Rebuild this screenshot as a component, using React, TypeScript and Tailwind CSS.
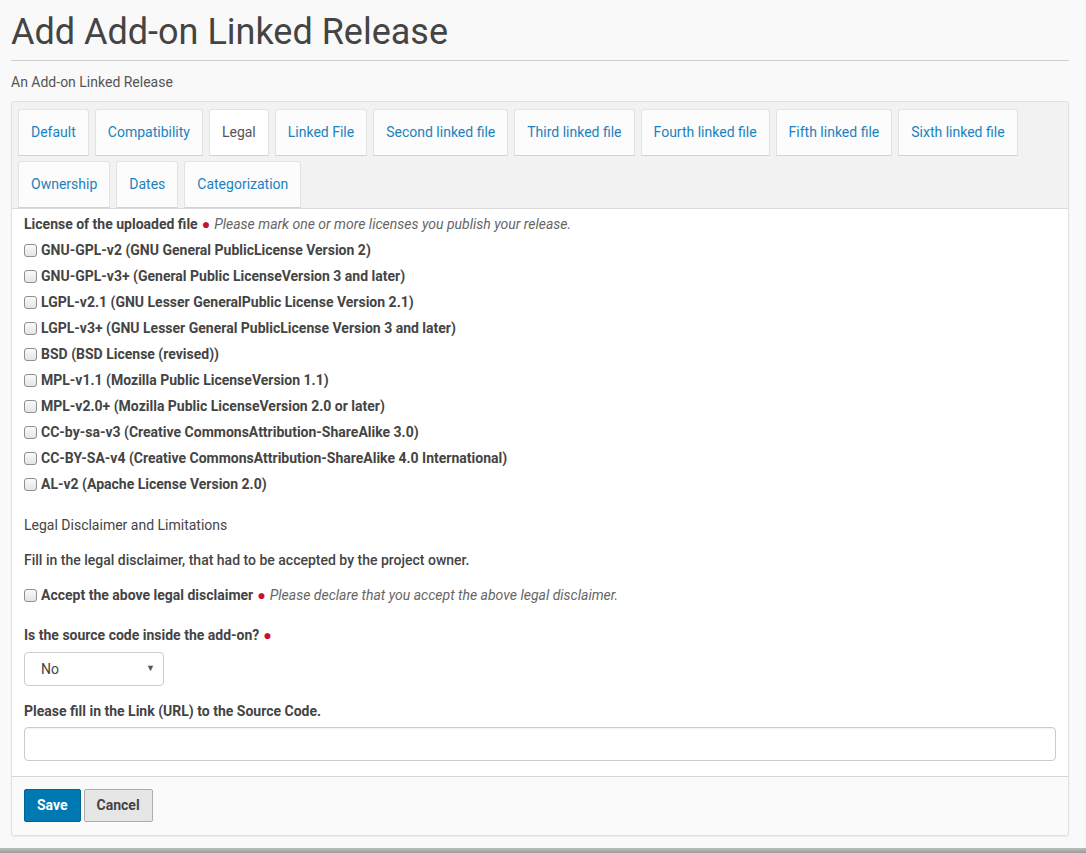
import React from "react";

const tabsRow1 = [
  "Default",
  "Compatibility",
  "Legal",
  "Linked File",
  "Second linked file",
  "Third linked file",
  "Fourth linked file",
  "Fifth linked file",
  "Sixth linked file",
];
const tabsRow2 = ["Ownership", "Dates", "Categorization"];

const licenses = [
  "GNU-GPL-v2 (GNU General PublicLicense Version 2)",
  "GNU-GPL-v3+ (General Public LicenseVersion 3 and later)",
  "LGPL-v2.1 (GNU Lesser GeneralPublic License Version 2.1)",
  "LGPL-v3+ (GNU Lesser General PublicLicense Version 3 and later)",
  "BSD (BSD License (revised))",
  "MPL-v1.1 (Mozilla Public LicenseVersion 1.1)",
  "MPL-v2.0+ (Mozilla Public LicenseVersion 2.0 or later)",
  "CC-by-sa-v3 (Creative CommonsAttribution-ShareAlike 3.0)",
  "CC-BY-SA-v4 (Creative CommonsAttribution-ShareAlike 4.0 International)",
  "AL-v2 (Apache License Version 2.0)",
];

function Tab({ label }: { label: string }) {
  const active = label === "Legal";
  return (
    <div
      className={`h-[47px] px-[12px] flex items-center border border-[#e3e3e3] border-b-[#d2d2d2] rounded-t-[3px] bg-[#fcfcfc] text-[14px] ${
        active ? "text-[#555] bg-white" : "text-[#1a82bf]"
      }`}
    >
      {label}
    </div>
  );
}

function Dot() {
  return <span className="text-[#c8102e] mx-[4px] text-[14px]">●</span>;
}

function Box() {
  return (
    <span className="inline-block w-[13px] h-[13px] rounded-[3px] border border-[#8f8f8f] bg-gradient-to-b from-[#fafafa] to-[#e4e4e4] mr-[4px] shrink-0" />
  );
}

export default function App() {
  return (
    <div
      className="min-h-[853px] bg-[#f9f9f9] flex flex-col text-[#444]"
      style={{ fontFamily: "Roboto, 'Noto Sans', sans-serif" }}
    >
      <div className="flex-1 px-[11px] pr-[17px]">
        <h1 className="text-[36px] leading-[40px] pt-[12px] pb-[8px] text-[#444] font-normal">
          Add Add-on Linked Release
        </h1>
        <div className="border-t border-[#cfcfcf]" />
        <p className="text-[14px] text-[#555] mt-[12px] leading-[18px]">
          An Add-on Linked Release
        </p>
        <div className="mt-[10px] border border-[#e0e0e0] rounded-[3px] bg-white shadow-[0_1px_2px_rgba(0,0,0,0.06)] overflow-hidden">
          <div className="bg-[#f2f2f2] border-b border-[#dcdcdc] px-[6px] pt-[7px] flex flex-col gap-[5px]">
            <div className="flex gap-[6px]">
              {tabsRow1.map((t) => (
                <Tab key={t} label={t} />
              ))}
            </div>
            <div className="flex gap-[6px]">
              {tabsRow2.map((t) => (
                <Tab key={t} label={t} />
              ))}
            </div>
          </div>
          <div className="px-[12px] pt-[6px] pb-[15px] text-[14px]">
            <div className="leading-[18px] flex items-center">
              <span className="font-bold">License of the uploaded file</span>
              <Dot />
              <span className="italic text-[#666]">
                Please mark one or more licenses you publish your release.
              </span>
            </div>
            <div className="mt-[8px] flex flex-col gap-[8px]">
              {licenses.map((l) => (
                <label key={l} className="flex items-center leading-[18px] font-bold">
                  <Box />
                  {l}
                </label>
              ))}
            </div>
            <div className="mt-[23px] leading-[18px]">Legal Disclaimer and Limitations</div>
            <div className="mt-[17px] leading-[18px] font-medium">
              Fill in the legal disclaimer, that had to be accepted by the project owner.
            </div>
            <div className="mt-[17px] leading-[18px] flex items-center">
              <Box />
              <span className="font-bold">Accept the above legal disclaimer</span>
              <Dot />
              <span className="italic text-[#666]">
                Please declare that you accept the above legal disclaimer.
              </span>
            </div>
            <div className="mt-[22px] leading-[18px] flex items-center">
              <span className="font-bold">Is the source code inside the add-on?</span>
              <Dot />
            </div>
            <div className="mt-[8px] w-[140px] h-[34px] border border-[#cccccc] rounded-[4px] flex items-center justify-between pl-[16px] pr-[8px] bg-white">
              <span>No</span>
              <span className="text-[9px] text-[#555]">▼</span>
            </div>
            <div className="mt-[16px] leading-[18px] font-bold">
              Please fill in the Link (URL) to the Source Code.
            </div>
            <div className="mt-[7px] h-[34px] border border-[#cccccc] rounded-[4px] bg-white shadow-[inset_0_1px_1px_rgba(0,0,0,0.05)]" />
          </div>
          <div className="border-t border-[#d5d5d5] bg-[#fafafa] px-[12px] pt-[12px] pb-[13px] flex gap-[3px]">
            <button className="h-[33px] px-[12px] bg-[#0079b3] border border-[#006494] rounded-[2px] text-white font-bold text-[14px]">
              Save
            </button>
            <button className="h-[33px] px-[12px] bg-[#e6e6e6] border border-[#adadad] rounded-[2px] text-[#444] font-bold text-[14px]">
              Cancel
            </button>
          </div>
        </div>
      </div>
      <div className="h-[5px] bg-gradient-to-b from-[#bdbdbd] to-[#9a9a9a] mt-[12px]" />
    </div>
  );
}
